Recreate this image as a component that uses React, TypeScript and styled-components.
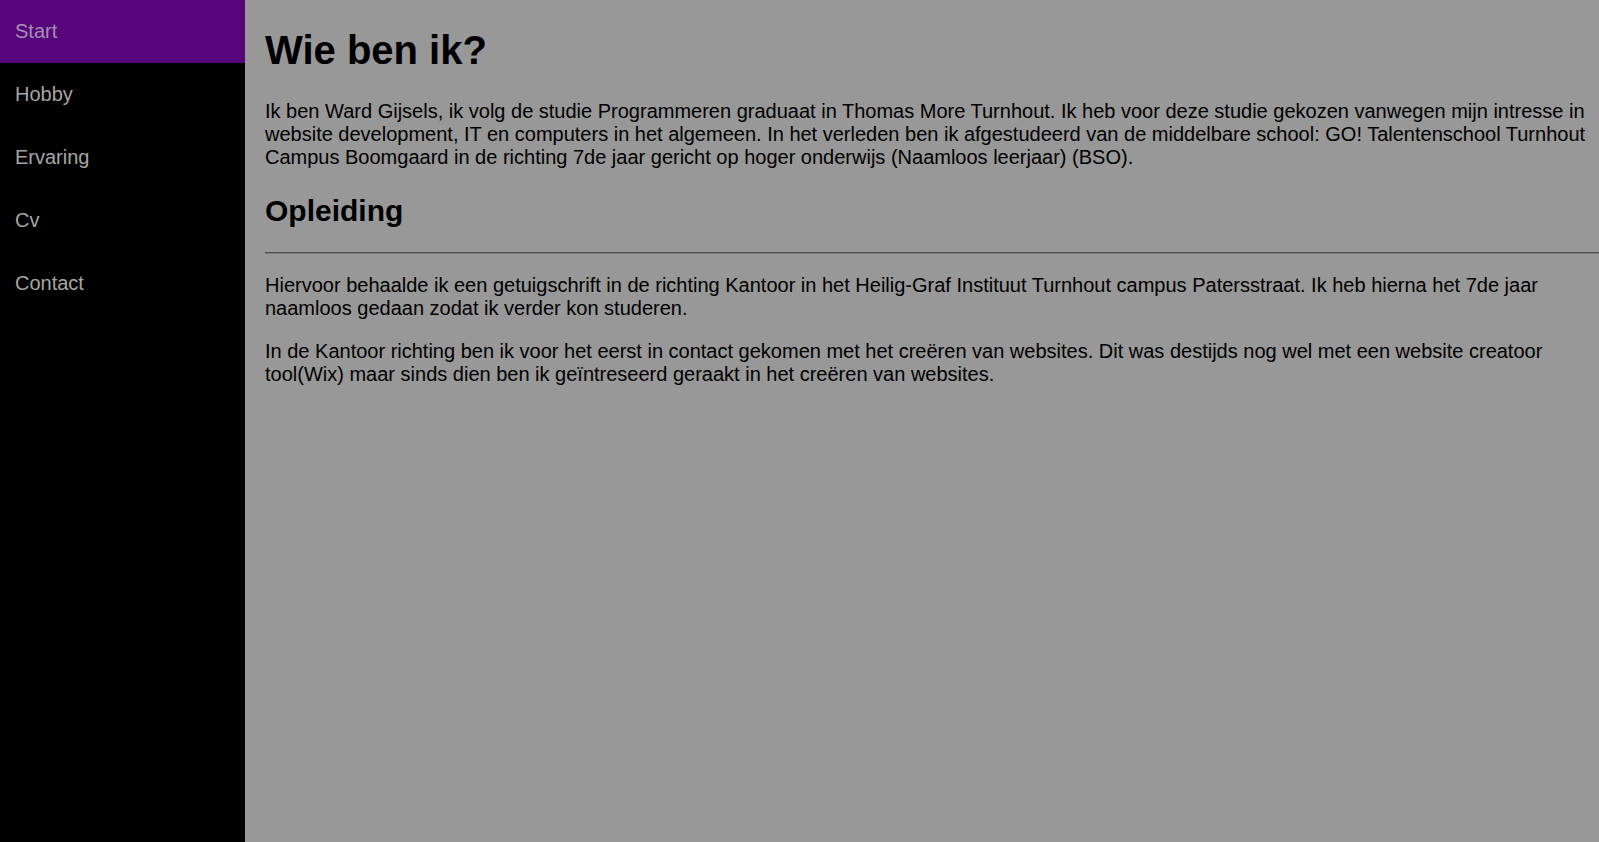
import React from "react";
import styled, { createGlobalStyle } from "styled-components";

const GlobalStyle = createGlobalStyle`
  html, body {
    margin: 0;
    padding: 0;
    background: #989898;
  }
  body {
    font-family: "Liberation Sans", Arial, sans-serif;
    font-size: 20px;
    color: #000;
  }
`;

const Layout = styled.div`
  display: flex;
  min-height: 100vh;
`;

const SideNav = styled.nav`
  width: 245px;
  flex: 0 0 245px;
  background: #000;
  display: flex;
  flex-direction: column;
`;

const NavLink = styled.a<{ $active?: boolean }>`
  display: block;
  padding: 20px 15px;
  font-size: 20px;
  line-height: 23px;
  text-decoration: none;
  color: ${(p) => (p.$active ? "#a68fb4" : "#a6a6a6")};
  background: ${(p) => (p.$active ? "#56057b" : "transparent")};
  cursor: pointer;
`;

const Main = styled.main`
  flex: 1;
  padding: 1px 0 0 20px;
  min-width: 0;
`;

const Title = styled.h1`
  font-size: 40px;
  font-weight: bold;
  margin: 0.67em 0;
`;

const SubTitle = styled.h2`
  font-size: 30px;
  line-height: 35px;
  font-weight: bold;
  margin: 0.83em 0 24px;
`;

const Text = styled.p`
  margin: 1em 0;
  line-height: 23px;
`;

const Rule = styled.hr`
  margin: 0.5em 0;
  border: none;
  border-top: 1px solid #505050;
  border-bottom: 1px solid #7a7a7a;
  height: 0;
`;

const links = ["Start", "Hobby", "Ervaring", "Cv", "Contact"];

export default function App() {
  return (
    <>
      <GlobalStyle />
      <Layout>
        <SideNav>
          {links.map((l, i) => (
            <NavLink key={l} $active={i === 0}>
              {l}
            </NavLink>
          ))}
        </SideNav>
        <Main>
          <Title>Wie ben ik?</Title>
          <Text>
            Ik ben Ward Gijsels, ik volg de studie Programmeren graduaat in Thomas More Turnhout. Ik heb voor deze
            studie gekozen vanwegen mijn intresse in website development, IT en computers in het algemeen. In het
            verleden ben ik afgestudeerd van de middelbare school: GO! Talentenschool Turnhout Campus Boomgaard in de
            richting 7de jaar gericht op hoger onderwijs (Naamloos leerjaar) (BSO).
          </Text>
          <SubTitle>Opleiding</SubTitle>
          <Rule />
          <Text>
            Hiervoor behaalde ik een getuigschrift in de richting Kantoor in het Heilig-Graf Instituut Turnhout campus
            Patersstraat. Ik heb hierna het 7de jaar naamloos gedaan zodat ik verder kon studeren.
          </Text>
          <Text>
            In de Kantoor richting ben ik voor het eerst in contact gekomen met het creëren van websites. Dit was
            destijds nog wel met een website creatoor tool(Wix) maar sinds dien ben ik geïntreseerd geraakt in het
            creëren van websites.
          </Text>
        </Main>
      </Layout>
    </>
  );
}
